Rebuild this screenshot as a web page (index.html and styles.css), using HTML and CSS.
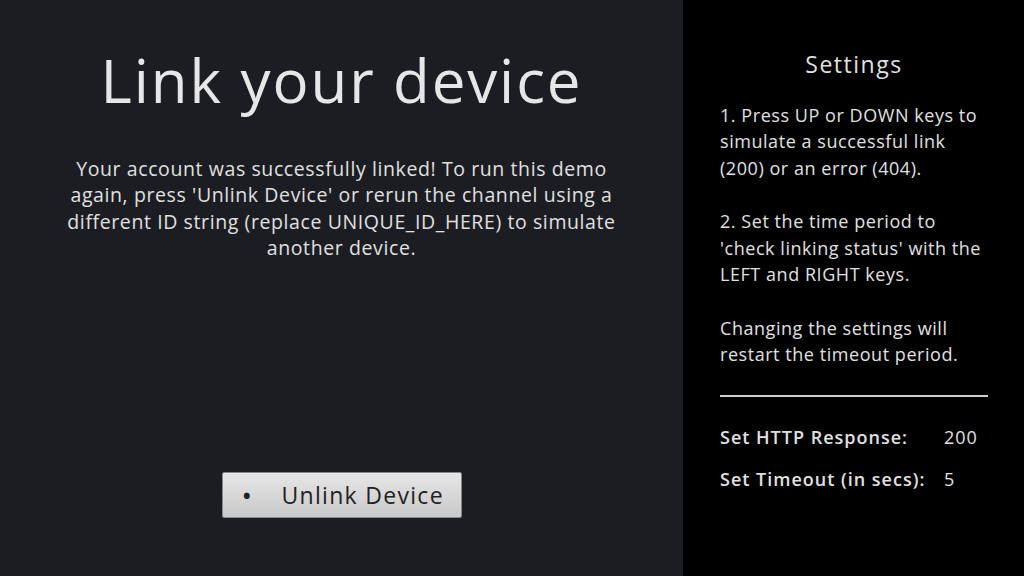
FILE: index.html
```html
<!DOCTYPE html>
<html>
<head>
<meta charset="utf-8">
<link rel="stylesheet" href="styles.css">
</head>
<body>
<div class="screen">
  <main class="main">
    <h1 class="title">Link your device</h1>
    <p class="message">Your account was successfully linked! To run this demo again, press 'Unlink Device' or rerun the channel using a different ID string (replace UNIQUE_ID_HERE) to simulate another device.</p>
    <div class="spacer"></div>
    <button class="btn"><span class="bullet">•</span><span class="btn-label">Unlink Device</span></button>
  </main>
  <aside class="side">
    <h2 class="side-title">Settings</h2>
    <p class="side-text">1. Press UP or DOWN keys to simulate a successful link (200) or an error (404).</p>
    <p class="side-text">2. Set the time period to 'check linking status' with the LEFT and RIGHT keys.</p>
    <p class="side-text">Changing the settings will restart the timeout period.</p>
    <hr class="rule">
    <div class="setting"><span class="setting-label">Set HTTP Response:</span><span class="setting-value">200</span></div>
    <div class="setting"><span class="setting-label">Set Timeout (in secs):</span><span class="setting-value">5</span></div>
  </aside>
</div>
</body>
</html>
```

FILE: styles.css
```css
* { box-sizing: border-box; }
html, body { margin: 0; padding: 0; }
body {
  width: 1024px;
  height: 576px;
  overflow: hidden;
  font-family: "Open Sans", "Lato", sans-serif;
  background: #000;
}
.screen {
  display: flex;
  width: 1024px;
  height: 576px;
}
.main {
  width: 683px;
  background: #1c1d22;
  display: flex;
  flex-direction: column;
  align-items: center;
  padding: 44px 0 58px;
}
.title {
  margin: 0;
  font-size: 60px;
  font-weight: 500;
  color: #e6e6e6;
  line-height: 72px;
  letter-spacing: 1.9px;
}
.message {
  margin: 40px 0 0;
  width: 568px;
  text-align: center;
  font-size: 19.5px;
  line-height: 26.3px;
  color: #e0e0e0;
  letter-spacing: 0.6px;
}
.spacer { flex: 1; }
.btn {
  width: 240px;
  height: 46px;
  border: 1px solid #888;
  border-radius: 2px;
  background: linear-gradient(#e6e6e6, #c9c9c9);
  display: flex;
  align-items: center;
  padding: 0 0 0 19px;
  font-family: inherit;
  font-size: 23px;
  color: #222;
}
.bullet { font-size: 28px; width: 40px; text-align: left; line-height: 1; }
.btn-label { letter-spacing: 1.3px; }
.side {
  flex: 1;
  background: #000;
  padding: 48px 36px 0 37px;
  color: #e0e0e0;
}
.side-title {
  margin: 0 0 22px;
  text-align: center;
  font-size: 23px;
  font-weight: 500;
  line-height: 32px;
  letter-spacing: 1.5px;
}
.side-text {
  margin: 0 0 27.5px;
  font-size: 18px;
  line-height: 26.3px;
  letter-spacing: 0.55px;
}
.rule {
  margin: 14px 0 27px;
  border: 0;
  border-top: 2px solid #cfcfcf;
}
.setting {
  display: flex;
  font-size: 18px;
  line-height: 26px;
  margin-bottom: 16px;
  letter-spacing: 1px;
}
.setting-label { font-weight: 600; width: 224px; }
```
